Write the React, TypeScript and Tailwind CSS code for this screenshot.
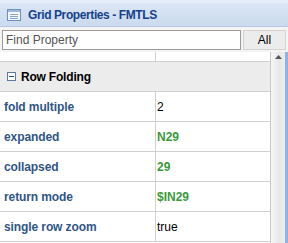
const rows = [
    { label: 'fold multiple', value: '2', green: false },
    { label: 'expanded', value: 'N29', green: true },
    { label: 'collapsed', value: '29', green: true },
    { label: 'return mode', value: '$IN29', green: true },
    { label: 'single row zoom', value: 'true', green: false },
]

const App = () => {
    return (
        <div className="w-[288px] h-[243px] overflow-hidden bg-[#f4f4f4] font-['Liberation_Sans',Arial,sans-serif] flex flex-col">
            {/* title bar */}
            <div className="h-[27px] shrink-0 flex items-center pl-[7px] gap-[7px] border-t-[3px] border-[#e3ecf8] bg-gradient-to-b from-[#dbe6f5] to-[#cbdaee] border-b border-b-[#b5c8e2]">
                <svg width="14" height="12" viewBox="0 0 14 12">
                    <rect x="0.5" y="0.5" width="13" height="11" fill="#f4f8fd" stroke="#6f8fbb" />
                    <rect x="1" y="1" width="12" height="2" fill="#9db7dc" />
                    <line x1="3" y1="5.5" x2="11" y2="5.5" stroke="#8aa3c6" />
                    <line x1="3" y1="7.5" x2="11" y2="7.5" stroke="#8aa3c6" />
                    <line x1="3" y1="9.5" x2="11" y2="9.5" stroke="#8aa3c6" />
                </svg>
                <span className="text-[12px] font-bold text-[#15428b] tracking-[-0.4px]">Grid Properties - FMTLS</span>
            </div>

            {/* search row */}
            <div className="flex gap-[2px] px-[2px] pt-[3px] pb-[2px] shrink-0">
                <input
                    type="text"
                    placeholder="Find Property"
                    className="w-[239px] h-[20px] border border-[#9a9a9a] bg-white px-[3px] text-[12px] text-[#555] placeholder:text-[#555] outline-none" />
                <button className="flex-1 h-[20px] border border-[#d2d2d2] bg-[#ececec] text-[12px] text-black">All</button>
            </div>

            {/* grid */}
            <div className="flex flex-1 min-h-0">
                <div className="flex-1 bg-white border-r border-[#c8c8c8] flex flex-col">
                    <div className="h-[10px] shrink-0 flex border-b border-[#d0d0d0]">
                        <div className="w-[156px] border-r border-[#d0d0d0]" />
                    </div>
                    <div className="h-[30px] shrink-0 bg-[#ececec] border-b border-[#d0d0d0] flex items-center pl-[7px] gap-[5px]">
                        <svg width="9" height="9" viewBox="0 0 9 9">
                            <rect x="0.5" y="0.5" width="8" height="8" fill="#fff" stroke="#5a7aa5" />
                            <line x1="2" y1="4.5" x2="7" y2="4.5" stroke="#2a4a7a" />
                        </svg>
                        <span className="text-[12px] font-bold text-black tracking-[-0.2px]">Row Folding</span>
                    </div>
                    {rows.map((r) => (
                        <div key={r.label} className="h-[30px] shrink-0 flex border-b border-[#d0d0d0]">
                            <div className="w-[156px] border-r border-[#d0d0d0] flex items-center pl-[4px] text-[12px] font-bold text-[#2f5687] tracking-[-0.1px]">
                                {r.label}
                            </div>
                            <div className={`flex-1 flex items-center pl-[1px] text-[12px] ${r.green ? 'font-bold text-[#3b9a3b]' : 'text-black'}`}>
                                {r.value}
                            </div>
                        </div>
                    ))}
                </div>
                {/* scrollbar */}
                <div className="w-[17px] shrink-0 flex bg-gradient-to-r from-[#f6f6f6] via-[#e8e8e8] to-[#f0f0f0]">
                    <div className="flex-1 flex justify-center pt-[3px]">
                        <svg width="7" height="4" viewBox="0 0 7 4">
                            <path d="M0 4 L3.5 0 L7 4 Z" fill="#555" />
                        </svg>
                    </div>
                    <div className="w-[3px] bg-[#8fb3e6]" />
                </div>
            </div>
        </div>
    )
}

export default App
